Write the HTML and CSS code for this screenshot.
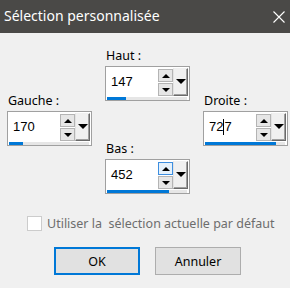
FILE: index.html
```html
<!DOCTYPE html>
<html lang="fr">
<head>
    <meta charset="UTF-8">
    <title>Sélection personnalisée</title>
    <link rel="stylesheet" href="styles.css">
</head>
<body>
    <div class="window">
        <div class="titlebar">
            <span class="title">Sélection personnalisée</span>
            <svg class="close" width="12" height="12" viewBox="0 0 12 12">
                <path d="M0.5 0.5 L11.5 11.5 M11.5 0.5 L0.5 11.5" stroke="#ffffff" stroke-width="1.1" fill="none"/>
            </svg>
        </div>
        <div class="content">
            <div class="fields">
                <div class="field side">
                    <label>Gauche :</label>
                    <div class="spin-box">
                        <div class="spin-row">
                            <span class="value">170</span>
                            <div class="arrows">
                                <span class="arrow up"></span>
                                <span class="arrow down"></span>
                            </div>
                            <span class="drop"></span>
                        </div>
                        <div class="track"><div class="bar" style="width: 14px"></div></div>
                    </div>
                </div>
                <div class="middle">
                    <div class="field">
                        <label>Haut :</label>
                        <div class="spin-box">
                            <div class="spin-row">
                                <span class="value">147</span>
                                <div class="arrows">
                                    <span class="arrow up"></span>
                                    <span class="arrow down"></span>
                                </div>
                                <span class="drop"></span>
                            </div>
                            <div class="track"><div class="bar" style="width: 19px"></div></div>
                        </div>
                    </div>
                    <div class="field">
                        <label>Bas :</label>
                        <div class="spin-box">
                            <div class="spin-row">
                                <span class="value">452</span>
                                <div class="arrows">
                                    <span class="arrow up hover"></span>
                                    <span class="arrow down"></span>
                                </div>
                                <span class="drop"></span>
                            </div>
                            <div class="track"><div class="bar" style="width: 62px"></div></div>
                        </div>
                    </div>
                </div>
                <div class="field side">
                    <label>Droite :</label>
                    <div class="spin-box">
                        <div class="spin-row">
                            <span class="value">72<span class="caret"></span>7</span>
                            <div class="arrows">
                                <span class="arrow up"></span>
                                <span class="arrow down"></span>
                            </div>
                            <span class="drop"></span>
                        </div>
                        <div class="track"><div class="bar" style="width: 71px"></div></div>
                    </div>
                </div>
            </div>
            <div class="check">
                <span class="box"></span>
                <span class="check-text">Utiliser la  sélection actuelle par défaut</span>
            </div>
            <div class="buttons">
                <button class="btn default">OK</button>
                <button class="btn">Annuler</button>
            </div>
        </div>
    </div>
</body>
</html>
```

FILE: styles.css
```css
body {
    margin: 0;
    background-color: #f0f0f0;
    font-family: "Noto Sans", "Open Sans", sans-serif;
}
.window {
    width: 290px;
    height: 288px;
    overflow: hidden;
}
.titlebar {
    height: 33px;
    background-color: #4a4947;
    display: flex;
    align-items: center;
    justify-content: space-between;
    padding: 0 5px 0 4px;
    box-sizing: border-box;
}
.title {
    color: #ffffff;
    font-size: 14px;
    margin-top: -2px;
}
.close {
    margin-right: 0;
}
.fields {
    display: flex;
    gap: 13px;
    padding: 15px 0 0 7px;
}
.middle {
    display: flex;
    flex-direction: column;
    gap: 40px;
}
.side {
    margin-top: 45px;
}
.field label {
    display: block;
    font-size: 12.5px;
    line-height: 16px;
    height: 16px;
    margin-bottom: 2px;
    color: #000;
    padding-left: 1px;
}
.spin-box {
    width: 85px;
    height: 35px;
    box-sizing: border-box;
    border: 1px solid #a0a0a0;
    background-color: #ffffff;
    display: flex;
    flex-direction: column;
}
.spin-row {
    display: flex;
    height: 30px;
}
.value {
    flex: 1;
    font-family: "Liberation Sans", Arial, sans-serif;
    font-size: 13px;
    line-height: 32px;
    padding-left: 5px;
    color: #000;
    display: flex;
    align-items: center;
}
.caret {
    display: inline-block;
    width: 1px;
    height: 16px;
    background-color: #000;
}
.arrows {
    width: 15px;
    display: flex;
    flex-direction: column;
    gap: 1px;
    padding-top: 2px;
}
.arrow {
    height: 13px;
    box-sizing: border-box;
    border: 1px solid #b4b4b4;
    background-color: #e6e6e6;
    display: flex;
    align-items: center;
    justify-content: center;
}
.arrow::before {
    content: "";
    border-left: 4px solid transparent;
    border-right: 4px solid transparent;
}
.arrow.up::before {
    border-bottom: 4px solid #000;
}
.arrow.down::before {
    border-top: 4px solid #000;
}
.arrow.hover {
    border-color: #3d8ee0;
    background-color: #e5f1fb;
}
.drop {
    width: 15px;
    height: 28px;
    margin: 1px 1px 0 0;
    box-sizing: border-box;
    background-color: #f0f0f0;
    border-top: 1px solid #f0f0f0;
    border-left: 1px solid #e3e3e3;
    border-right: 1px solid #6a6a6a;
    border-bottom: 1px solid #6a6a6a;
    box-shadow: inset -1px -1px 0 #a0a0a0;
    display: flex;
    align-items: center;
    justify-content: center;
}
.drop::before {
    content: "";
    margin-top: -1px;
    border-left: 5px solid transparent;
    border-right: 5px solid transparent;
    border-top: 5px solid #000;
}
.track {
    height: 3px;
    margin: 0 2px 0 1px;
    background-color: #e6e6e6;
}
.bar {
    height: 3px;
    background-color: #0078d7;
}
.check {
    display: flex;
    align-items: center;
    margin: 21px 0 0 27px;
    height: 16px;
}
.box {
    width: 15px;
    height: 15px;
    box-sizing: border-box;
    border: 1px solid #cccccc;
    background-color: #ffffff;
    margin-right: 5px;
}
.check-text {
    white-space: pre;
    font-size: 12.5px;
    color: #6d6d6d;
}
.buttons {
    display: flex;
    gap: 15px;
    margin: 16px 0 0 54px;
}
.btn {
    width: 86px;
    height: 28px;
    box-sizing: border-box;
    border: 1px solid #adadad;
    background-color: #e1e1e1;
    font-family: "Noto Sans", "Open Sans", sans-serif;
    font-size: 12.5px;
    color: #000;
    padding: 0;
}
.btn.default {
    border: 2px solid #0078d7;
}
```
